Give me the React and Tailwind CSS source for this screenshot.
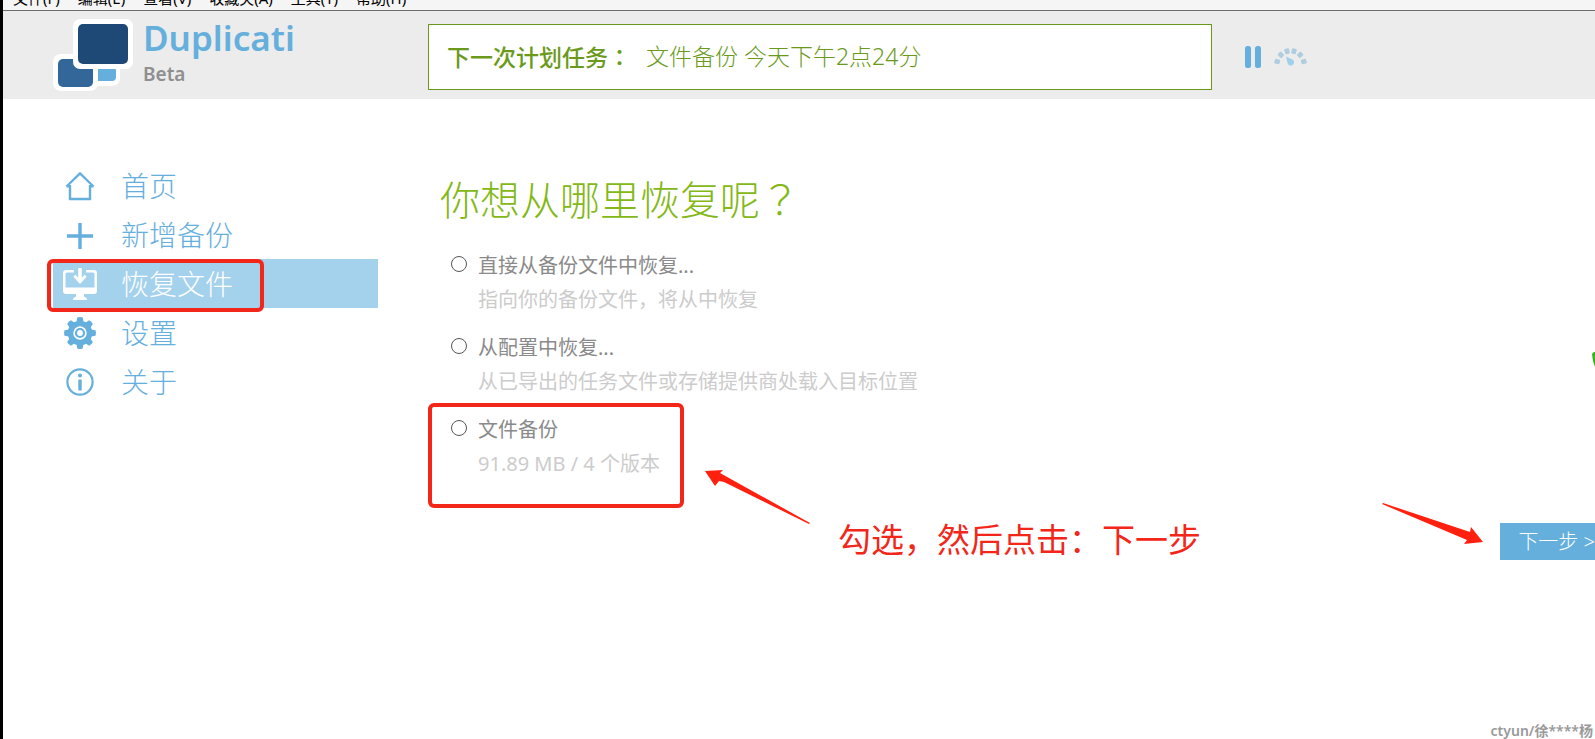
import { useState } from "react";

const menuItems = ["文件(F)", "编辑(E)", "查看(V)", "收藏夹(A)", "工具(T)", "帮助(H)"];

const restoreOptions = [
  {
    id: "direct",
    title: "直接从备份文件中恢复...",
    description: "指向你的备份文件，将从中恢复",
  },
  {
    id: "config",
    title: "从配置中恢复...",
    description: "从已导出的任务文件或存储提供商处载入目标位置",
  },
  {
    id: "backup",
    title: "文件备份",
    description: "91.89 MB / 4 个版本",
    marked: true,
  },
];

// Full-width punctuation, centred in its box
function Mark({ children }) {
  return <span className="font-['Noto_Sans_CJK_TC',sans-serif]">{children}</span>;
}

function Logo() {
  return (
    <svg width="80" height="74" viewBox="0 0 80 74" aria-hidden="true">
      <g fill="#fff">
        <rect x="20" y="0" width="60" height="50" rx="7" />
        <rect x="0" y="35" width="45" height="37" rx="8" />
        <rect x="34" y="38" width="33" height="29" rx="8" />
      </g>
      <rect x="45" y="48" width="18" height="14" rx="4" fill="#65afdd" />
      <path d="M45 46h4v16h-4z" fill="#65afdd" />
      <rect x="5" y="40" width="35" height="28" rx="5" fill="#336699" />
      <path d="M20 38v5a7 7 0 0 0 7 7h37v-12z" fill="#fff" />
      <rect x="25" y="5" width="50" height="40" rx="5" fill="#1e4875" />
    </svg>
  );
}

function HomeIcon() {
  return (
    <svg width="34" height="34" viewBox="0 0 34 34" fill="none" stroke="currentColor" strokeWidth="2.4">
      <path d="M3.500 17.500 17 4.500l13.500 13M3.500 17.300H7V30h20V17.300h3.500" />
    </svg>
  );
}

function AddIcon() {
  return (
    <svg width="34" height="34" viewBox="0 0 34 34" fill="none" stroke="currentColor" strokeWidth="3.4">
      <path d="M17 5v26M4 18h26" />
    </svg>
  );
}

function RestoreIcon() {
  return (
    <svg width="34" height="34" viewBox="0 0 34 34" fill="currentColor">
      <path d="M11 3H3a3 3 0 0 0-3 3v18a3 3 0 0 0 3 3h10v2.500l-3 2V33h14v-1.500l-3-2V27h10a3 3 0 0 0 3-3V6a3 3 0 0 0-3-3h-8v2.500h7a1.500 1.500 0 0 1 1.500 1.500v13.500h-29V7A1.500 1.500 0 0 1 4 5.500h7z" />
      <path d="M15.200 1h3.600v9.500l3-2.700 1.800 2L17 17l-6.600-7.200 1.800-2 3 2.700z" />
    </svg>
  );
}

function SettingsIcon() {
  const teeth = [0, 45, 90, 135, 180, 225, 270, 315];
  return (
    <svg width="34" height="34" viewBox="0 0 34 34" fill="currentColor">
      {teeth.map((angle) => (
        <path key={angle} d="M13.500 6l.8-4.500q2.700-1 5.400 0l.8 4.500z" transform={`rotate(${angle} 17 17)`} />
      ))}
      <circle cx="17" cy="17" r="9.500" fill="none" stroke="currentColor" strokeWidth="5.500" />
      <circle cx="17" cy="17" r="4" fill="none" stroke="currentColor" strokeWidth="2.200" />
    </svg>
  );
}

function AboutIcon() {
  return (
    <svg width="34" height="34" viewBox="0 0 34 34" fill="none" stroke="currentColor">
      <circle cx="17" cy="17" r="12.600" strokeWidth="2.200" />
      <path d="M17 14.500v11" strokeWidth="3.400" />
      <circle cx="17" cy="10.500" r="2" fill="currentColor" stroke="none" />
    </svg>
  );
}

function ThrottleIcon() {
  return (
    <svg width="33" height="18" viewBox="0 0 33 18">
      <g fill="#b0cddf">
        <rect x="-2.500" y="-2.400" width="5.400" height="4.800" rx="1" transform="translate(3 13.500) rotate(15)" />
        <rect x="-2.500" y="-2.400" width="5.400" height="4.800" rx="1" transform="translate(6.700 6.700) rotate(45)" />
        <rect x="-2.500" y="-2.400" width="5.400" height="4.800" rx="1" transform="translate(13 3) rotate(75)" />
        <rect x="-2.500" y="-2.400" width="5.400" height="4.800" rx="1" transform="translate(20 3) rotate(105)" />
        <rect x="-2.500" y="-2.400" width="5.400" height="4.800" rx="1" transform="translate(26.300 6.700) rotate(135)" />
        <rect x="-2.500" y="-2.400" width="5.400" height="4.800" rx="1" transform="translate(30 13.500) rotate(165)" />
      </g>
      <path d="M12 8.500l6.500 3a3.300 3.300 0 1 1-4.800 4z" fill="#9fcfeb" />
    </svg>
  );
}

const navItems = [
  { label: "首页", icon: HomeIcon },
  { label: "新增备份", icon: AddIcon },
  { label: "恢复文件", icon: RestoreIcon, active: true },
  { label: "设置", icon: SettingsIcon },
  { label: "关于", icon: AboutIcon },
];

function Header() {
  return (
    <header className="flex h-[88px] bg-[#ececec] pl-[50px]">
      <div className="flex w-[375px] shrink-0 gap-[10px] pt-2">
        <Logo />
        <div className="font-semibold">
          <div className="text-[35px] leading-[38px] text-[#65afdd]">Duplicati</div>
          <div className="text-[19px] leading-[34px] text-[#8f8f8f]">Beta</div>
        </div>
      </div>
      <div className="mt-[13px] flex h-[66px] w-full max-w-[784px] items-center gap-[15px] border border-[#6b9a1b] bg-white px-[18px] pb-0.5 text-[23px] leading-[32px] text-[#6b9a1b]">
        <span className="font-medium">
          下一次计划任务<Mark>：</Mark>
        </span>
        <span className="font-light">文件备份 今天下午2点24分</span>
      </div>
      <div className="flex h-[92px] items-center gap-3 pl-[32px]">
        <button type="button" aria-label="暂停">
          <svg width="18" height="22" viewBox="0 0 18 22" fill="#65afdd">
            <rect x="1" width="6" height="22" rx="2.500" />
            <rect x="11" width="6" height="22" rx="2.500" />
          </svg>
        </button>
        <button type="button" aria-label="限速">
          <ThrottleIcon />
        </button>
      </div>
    </header>
  );
}

function Sidebar() {
  return (
    <nav className="w-[375px] shrink-0 pt-[62px] pr-[50px]">
      {navItems.map(({ label, icon: Icon, active }) => (
        <a
          key={label}
          href="#"
          className={`relative flex h-[49px] items-center gap-6 pl-[10px] text-[28px] font-light ${
            active ? "bg-[#a4d1ec] text-white" : "text-[#65afdd]"
          }`}
        >
          <Icon />
          <span>{label}</span>
          {active && (
            <span className="absolute top-0 -left-[6px] h-[53px] w-[217px] rounded-md border-4 border-[#f3261a]" />
          )}
        </a>
      ))}
    </nav>
  );
}

function RestoreOption({ option, checked, onSelect }) {
  return (
    <div className="relative flex h-[82px] gap-[11px] pl-[23px]">
      <input
        type="radio"
        name="source"
        id={option.id}
        checked={checked}
        onChange={() => onSelect(option.id)}
        className="mt-[7px] size-4 appearance-none rounded-full border border-[#555] bg-white checked:border-[5px]"
      />
      <div className="text-[20px] leading-[34px] whitespace-nowrap">
        <label htmlFor={option.id} className="block text-[#8a8a8a]">
          {option.title}
        </label>
        <p className="text-[#ccc]">{option.description}</p>
      </div>
      {option.marked && (
        <>
          <span className="absolute -top-[10px] left-0 h-[105px] w-[256px] rounded-md border-4 border-[#f3261a]" />
          <svg
            className="absolute top-[57px] left-[277px]"
            width="106"
            height="55"
            viewBox="0 0 106 55"
            fill="#ff2010"
            aria-hidden="true"
          >
            <path d="M0 1 18 0 15 3 105 53 104 54 19 12 14 11 10 16z" />
          </svg>
        </>
      )}
    </div>
  );
}

function App() {
  const [source, setSource] = useState("");

  return (
    <div className="relative min-h-screen overflow-hidden border-l-[3px] border-black bg-white font-['Noto_Sans','Noto_Sans_CJK_SC',sans-serif]">
      <div className="flex h-[11px] items-end gap-[18px] overflow-hidden border-b border-[#6c6c6c] bg-[#f5f5f5] pl-[10px] text-[15px] leading-4 text-black">
        {menuItems.map((item) => (
          <span key={item} className="pb-1">
            {item}
          </span>
        ))}
      </div>

      <Header />

      <div className="flex pl-[50px]">
        <Sidebar />
        <main className="flex-1 pt-[69px]">
          <h1 className="pl-3 text-[40px] leading-[60px] font-light text-[#83b817]">
            你想从哪里恢复呢<Mark>？</Mark>
          </h1>
          <form className="pt-[19px]" onSubmit={(e) => e.preventDefault()}>
            {restoreOptions.map((option) => (
              <RestoreOption
                key={option.id}
                option={option}
                checked={source === option.id}
                onSelect={setSource}
              />
            ))}

            <div className="mt-[28px] flex items-start justify-between pl-[410px]">
              <p className="text-[33px] leading-[33px] text-[#f3261a]">勾选，然后点击：下一步</p>
              <button
                type="submit"
                className="relative -mr-[18px] h-[37px] bg-[#65afdd] px-[18px] text-[20px] leading-[37px] font-light whitespace-nowrap text-white"
              >
                下一步 &gt;
                <svg
                  className="absolute -top-[20px] -left-[118px]"
                  width="102"
                  height="42"
                  viewBox="0 0 102 42"
                  fill="#ff2010"
                  aria-hidden="true"
                >
                  <path d="M0 1 1 0 88 29 89 24 101 39 82 41 85 37z" />
                </svg>
              </button>
            </div>
          </form>
        </main>
      </div>

      <svg
        className="absolute top-[352px] right-0"
        width="3"
        height="15"
        viewBox="0 0 3 15"
        fill="#36b31b"
        aria-hidden="true"
      >
        <path d="M0 2 2 0h1v15L1 9z" />
      </svg>

      <div className="absolute right-[2px] bottom-0 text-[14px] leading-4 font-semibold text-[#999]">
        ctyun/徐****杨
      </div>
    </div>
  );
}

export default App;
